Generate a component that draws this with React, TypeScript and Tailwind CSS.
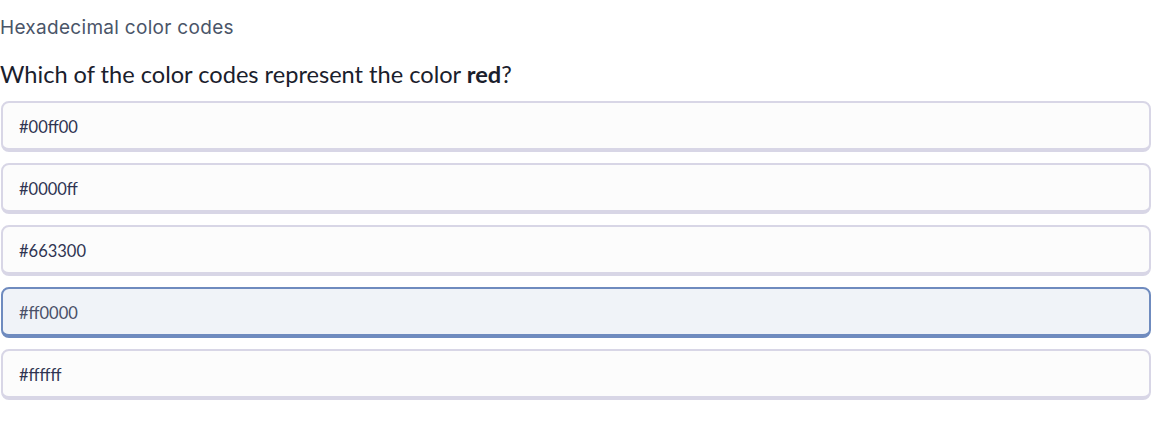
export default function App() {
  const options = [
    { code: '#00ff00', selected: false },
    { code: '#0000ff', selected: false },
    { code: '#663300', selected: false },
    { code: '#ff0000', selected: true },
    { code: '#ffffff', selected: false },
  ];

  return (
    <div className="w-[1160px] h-[423px] bg-white font-['Lato',sans-serif]">
      {/* Title */}
      <div className="pt-[16px] text-[19px] leading-[24px] text-[#4a5568] font-['Inter',sans-serif] font-normal tracking-[0.3px]">
        Hexadecimal color codes
      </div>

      {/* Question */}
      <div className="mt-[19px] text-[23.6px] leading-[30px] text-[#1a202c]">
        Which of the color codes represent the color <span className="font-bold">red</span>?
      </div>

      {/* Options */}
      <div className="mt-[12px] flex flex-col gap-[11px] pl-[1px] w-[1151px]">
        {options.map((o) => (
          <div
            key={o.code}
            className={
              o.selected
                ? 'h-[51px] rounded-[8px] border-2 border-b-4 border-[#6f8bbf] bg-[#f0f3f8] flex items-center pl-[16px] text-[16.5px] text-[#4a5068]'
                : 'h-[51px] rounded-[8px] border-2 border-b-4 border-[#d8d6e6] bg-[#fcfcfc] flex items-center pl-[16px] text-[16.5px] text-[#2f3452]'
            }
          >
            <span className="pt-[4px]">{o.code}</span>
          </div>
        ))}
      </div>
    </div>
  );
}
